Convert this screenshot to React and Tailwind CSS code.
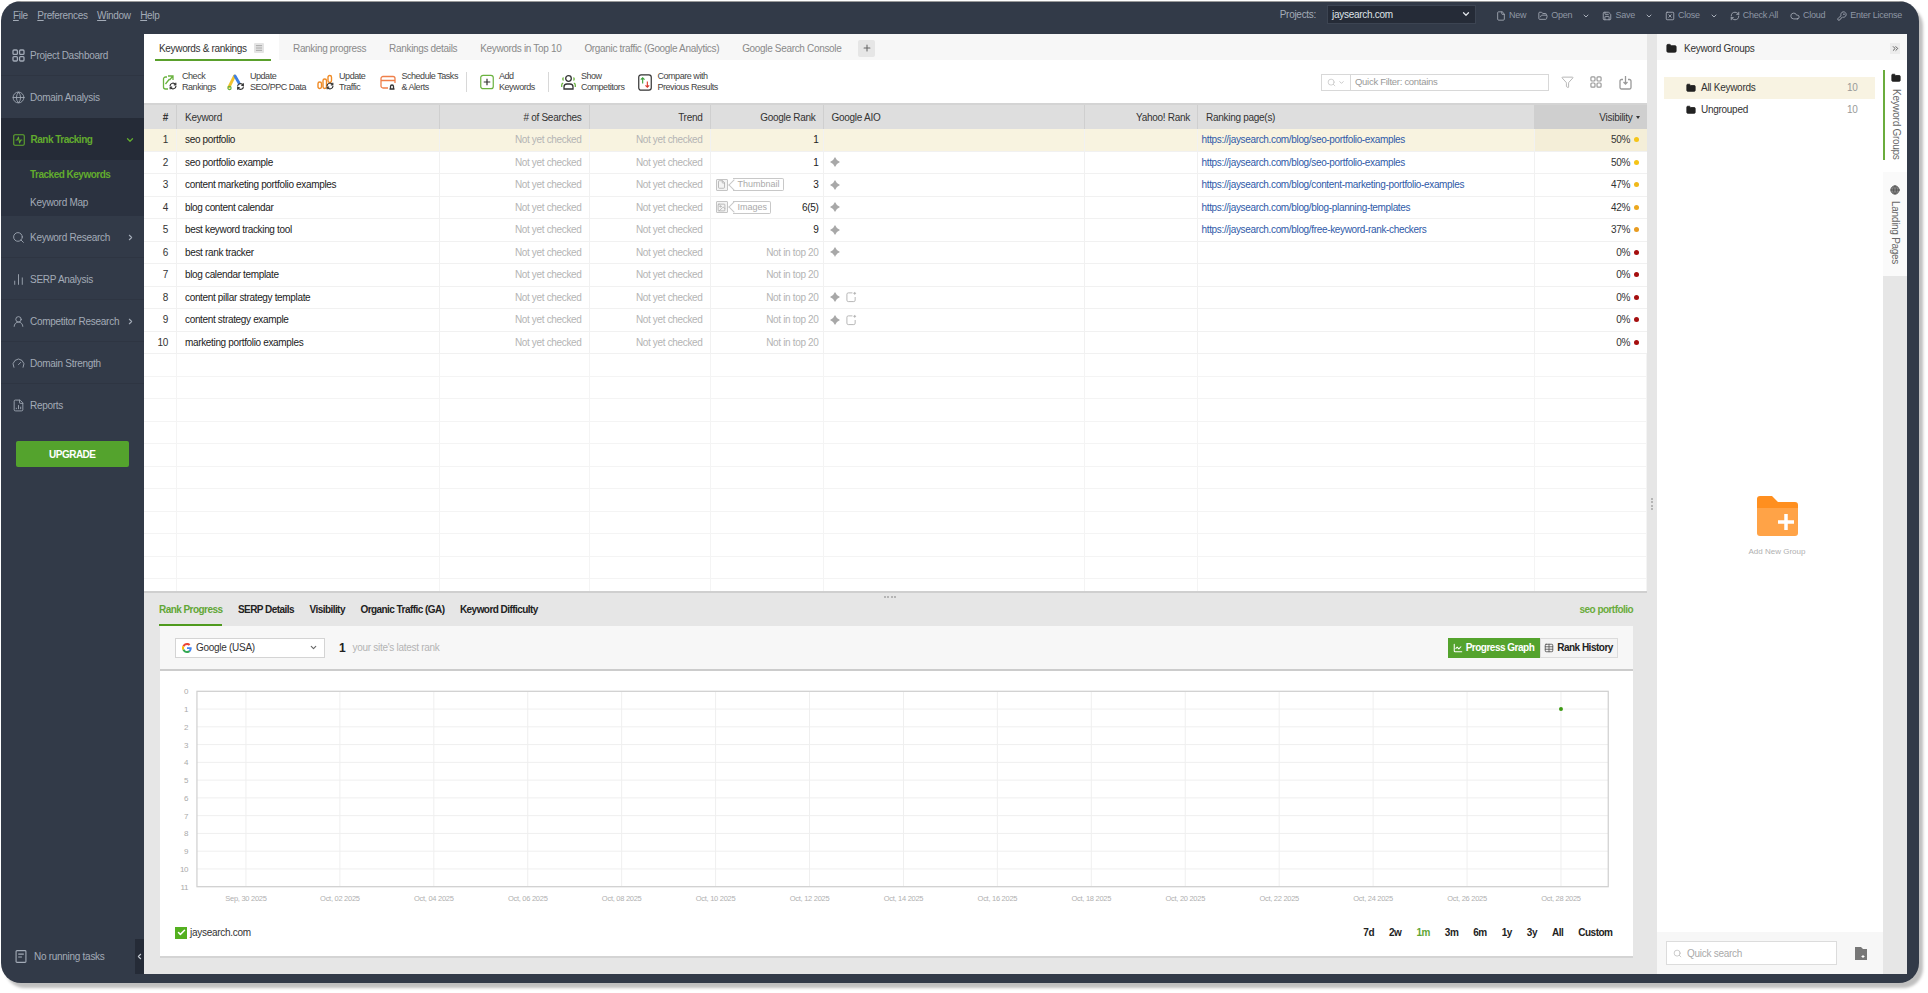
import {
  Globe, Search, ChartNoAxesColumn, UserRound, Gauge, FileChartColumn, ChevronDown, ChevronRight, ChevronLeft,
  Funnel, FolderOpen, Save, SquareX, RefreshCw, Cloud, KeyRound, Menu, Plus, File, Folder, Check, SquareActivity,
  ChevronsRight, Table, ChartLine, Image,
} from "lucide-react";

const COLS = "grid grid-cols-[33px_263px_149.5px_121px_113px_261.5px_113px_336.5px_112px]";

const ROWS = [
  { kw: "seo portfolio", rank: "1", url: "https://jaysearch.com/blog/seo-portfolio-examples", vis: "50%", dot: "bg-[#f5c518]" },
  { kw: "seo portfolio example", rank: "1", aio: 1, url: "https://jaysearch.com/blog/seo-portfolio-examples", vis: "50%", dot: "bg-[#f5c518]" },
  { kw: "content marketing portfolio examples", rank: "3", tag: "Thumbnail", aio: 1, url: "https://jaysearch.com/blog/content-marketing-portfolio-examples", vis: "47%", dot: "bg-[#f0b91a]" },
  { kw: "blog content calendar", rank: "6(5)", tag: "Images", aio: 1, url: "https://jaysearch.com/blog/blog-planning-templates", vis: "42%", dot: "bg-[#eca81f]" },
  { kw: "best keyword tracking tool", rank: "9", aio: 1, url: "https://jaysearch.com/blog/free-keyword-rank-checkers", vis: "37%", dot: "bg-[#e89b20]" },
  { kw: "best rank tracker", aio: 1, vis: "0%", dot: "bg-[#a50f0f]" },
  { kw: "blog calendar template", vis: "0%", dot: "bg-[#a50f0f]" },
  { kw: "content pillar strategy template", aio: 2, vis: "0%", dot: "bg-[#a50f0f]" },
  { kw: "content strategy example", aio: 2, vis: "0%", dot: "bg-[#a50f0f]" },
  { kw: "marketing portfolio examples", vis: "0%", dot: "bg-[#a50f0f]" },
];

const DATES = ["Sep, 30 2025", "Oct, 02 2025", "Oct, 04 2025", "Oct, 06 2025", "Oct, 08 2025", "Oct, 10 2025", "Oct, 12 2025", "Oct, 14 2025", "Oct, 16 2025", "Oct, 18 2025", "Oct, 20 2025", "Oct, 22 2025", "Oct, 24 2025", "Oct, 26 2025", "Oct, 28 2025"];

function DashIcon({ className }) {
  return (
    <svg viewBox="0 0 13 13" className={className} fill="none" stroke="currentColor" strokeWidth="1.3">
      <rect x="1" y="1" width="4.4" height="4.4" rx="1" />
      <rect x="7.6" y="1" width="4.4" height="4.4" rx="1" />
      <rect x="1" y="7.6" width="4.4" height="4.4" rx="1" />
      <rect x="7.6" y="7.6" width="4.4" height="4.4" rx="1" />
    </svg>
  );
}

function NavItem({ icon: Icon, label, arrow, border = true }) {
  return (
    <div className={`h-[42px] flex items-center pt-[1px] pl-[11px] pr-[9px] text-[#a3abb7] ${border ? "border-b border-[#2e3542]" : ""}`}>
      <Icon className="w-[13px] h-[13px] shrink-0" strokeWidth={1.6} />
      <span className="ml-[5px] whitespace-nowrap font-medium">{label}</span>
      {arrow && <ChevronRight className="ml-auto w-[9px] h-[9px]" strokeWidth={3} />}
    </div>
  );
}

function Sidebar() {
  return (
    <div className="w-[143px] shrink-0 flex flex-col text-[10px]">
      <NavItem icon={DashIcon} label="Project Dashboard" />
      <NavItem icon={Globe} label="Domain Analysis" border={false} />
      <div className="h-[42px] bg-[#252b37] flex items-center pt-[1px] pl-[11px] pr-[9px] text-[#62ac2e]">
        <SquareActivity className="w-[14px] h-[14px] -ml-[0.5px]" strokeWidth={1.8} />
        <span className="ml-[5px] font-bold tracking-[-0.5px]">Rank Tracking</span>
        <ChevronDown className="ml-auto w-[10px] h-[10px]" strokeWidth={3} />
      </div>
      <div className="h-[56px] bg-[#2b3240] pl-[29px] flex flex-col font-medium">
        <span className="h-[28px] flex items-center text-[#62ac2e] font-bold tracking-[-0.5px]">Tracked Keywords</span>
        <span className="h-[28px] flex items-center text-[#a3abb7]">Keyword Map</span>
      </div>
      <NavItem icon={Search} label="Keyword Research" arrow />
      <NavItem icon={ChartNoAxesColumn} label="SERP Analysis" />
      <NavItem icon={UserRound} label="Competitor Research" arrow />
      <NavItem icon={Gauge} label="Domain Strength" />
      <NavItem icon={FileChartColumn} label="Reports" border={false} />
      <div className="mt-[15px] ml-[14.5px] w-[113.5px] h-[26px] rounded-[2px] bg-[#54a32d] text-white font-bold tracking-[-0.5px] flex items-center justify-center">
        UPGRADE
      </div>
      <div className="mt-auto h-[35px] flex items-center">
        <svg viewBox="0 0 12 14" className="ml-[14px] w-[12px] h-[13px] text-[#a3abb7]" fill="none" stroke="currentColor" strokeWidth="1.2">
          <rect x="0.7" y="0.7" width="10.6" height="12.6" rx="1" />
          <path d="M3 4.5h6M3 7.5h4" />
        </svg>
        <span className="ml-[7px] text-[#a3abb7] font-medium">No running tasks</span>
        <div className="ml-auto w-[9px] self-stretch bg-[#252b37] flex items-center justify-center text-[#c0c6cf]">
          <ChevronLeft className="w-[9px] h-[9px]" strokeWidth={3} />
        </div>
      </div>
    </div>
  );
}

function TopAction({ icon: Icon, label, chevron }) {
  return (
    <div className="flex items-center text-[#8f97a4] text-[9px] tracking-[-0.25px]">
      <Icon className="w-[10px] h-[10px] text-[#a9b0bb]" strokeWidth={2} />
      <span className="ml-[3px]">{label}</span>
      {chevron && <ChevronDown className="ml-[10px] w-[8px] h-[8px] text-[#a9b0bb]" strokeWidth={3} />}
    </div>
  );
}

function TopBar() {
  return (
    <div className="h-[33px] shrink-0 flex items-center pb-[5px] pl-[12px] pr-[17px] text-[10px] border-t border-[#9a9a9a]">
      <div className="flex gap-[9.500px] text-[#a3abb7] tracking-[-0.33px]">
        <span><u>F</u>ile</span>
        <span><u>P</u>references</span>
        <span><u>W</u>indow</span>
        <span><u>H</u>elp</span>
      </div>
      <div className="ml-auto flex items-center gap-[12px]">
        <div className="flex items-center gap-[11px] mr-[8px] -mt-[3px]">
          <span className="text-[#a3abb7]">Projects:</span>
          <div className="w-[149px] h-[19px] bg-[#252b37] border border-[#3c4452] flex items-center px-[4px] text-[#dfe3e8]">
            jaysearch.com
            <ChevronDown className="ml-auto w-[10px] h-[10px]" strokeWidth={3} />
          </div>
        </div>
        <TopAction icon={File} label="New" />
        <TopAction icon={FolderOpen} label="Open" chevron />
        <TopAction icon={Save} label="Save" chevron />
        <TopAction icon={SquareX} label="Close" chevron />
        <TopAction icon={RefreshCw} label="Check All" />
        <TopAction icon={Cloud} label="Cloud" />
        <TopAction icon={KeyRound} label="Enter License" />
      </div>
    </div>
  );
}

function Tabs() {
  const others = ["Ranking progress", "Rankings details", "Keywords in Top 10", "Organic traffic (Google Analytics)", "Google Search Console"];
  return (
    <div className="h-[26px] shrink-0 bg-[#f7f7f7] flex items-stretch text-[10px] tracking-[-0.33px] text-[#8a8a8a]">
      <div className="w-[135px] bg-white relative flex items-center pt-[2px] pl-[15px] text-[#333]">
        Keywords &amp; rankings
        <span className="ml-[7px] w-[10px] h-[10px] bg-[#e4e4e4] rounded-[1px] flex items-center justify-center">
          <Menu className="w-[8px] h-[8px] text-[#888]" />
        </span>
        <span className="absolute left-[11px] bottom-[-1px] w-[116px] h-[2px] bg-[#5aa02c]" />
      </div>
      <div className="flex items-center gap-[23px] ml-[14px] pt-[2px]">
        {others.map((t) => <span key={t}>{t}</span>)}
        <span className="-ml-[6px] w-[17px] h-[17px] bg-[#e6e6e6] rounded-[2px] flex items-center justify-center">
          <Plus className="w-[10px] h-[10px] text-[#666]" strokeWidth={2.5} />
        </span>
      </div>
    </div>
  );
}

function MiniSync({ x, y }) {
  return (
    <g transform={`translate(${x} ${y})`} fill="none" stroke="#333" strokeWidth="1.2">
      <path d="M0.5 3.5A3 3 0 0 1 6 2M6.5 3.5A3 3 0 0 1 1 5" />
      <path d="M6.3 0.3V2.3H4.3M0.7 6.7V4.7H2.7" />
    </g>
  );
}

const TOOL_ICONS = {
  check: (
    <svg viewBox="0 0 15 17" className="w-[15px] h-[17px]" fill="none" stroke="#6ab23f" strokeWidth="1.3">
      <path d="M5 3H3.5A2 2 0 0 0 1.5 5v8a2 2 0 0 0 2 2H6" />
      <path d="M3.5 10l4-5M6 2h5v4M11 2 7.5 6" />
      <MiniSync x="7.5" y="8.5" />
    </svg>
  ),
  ppc: (
    <svg viewBox="0 0 18 18" className="w-[18px] h-[18px]" fill="none">
      <path d="M2 14 7.5 3" stroke="#f2c230" strokeWidth="2.8" strokeLinecap="round" />
      <path d="M8 3l4 7" stroke="#3f7fe0" strokeWidth="2.8" strokeLinecap="round" />
      <circle cx="2.5" cy="15" r="1.6" stroke="#6ab23f" strokeWidth="1.2" />
      <MiniSync x="10" y="10" />
    </svg>
  ),
  traffic: (
    <svg viewBox="0 0 17 16" className="w-[17px] h-[16px]" fill="none" stroke="#f08a24" strokeWidth="1.4">
      <rect x="1" y="8" width="3.5" height="6.5" rx="1.7" />
      <rect x="6" y="5" width="3.5" height="9.5" rx="1.7" />
      <rect x="11" y="1.5" width="3.5" height="7" rx="1.7" />
      <MiniSync x="9.5" y="8.5" />
    </svg>
  ),
  schedule: (
    <svg viewBox="0 0 16 17" className="w-[16px] h-[17px]" fill="none" stroke="#ef7f4a" strokeWidth="1.3">
      <path d="M8 14H3a2 2 0 0 1-2-2V4.500a2 2 0 0 1 2-2h10a2 2 0 0 1 2 2V9" />
      <path d="M1 6.500h14" />
      <path d="M9.500 15h5M10.500 14.500v-2a1.500 1.500 0 0 1 3 0v2" stroke="#333" />
    </svg>
  ),
  add: (
    <svg viewBox="0 0 15 16" className="w-[14px] h-[16px]" fill="none">
      <rect x="0.8" y="0.8" width="13.400" height="14.400" rx="2.500" stroke="#6ab23f" strokeWidth="1.300" />
      <path d="M7.500 4.500v7M4 8h7" stroke="#333" strokeWidth="1.300" />
    </svg>
  ),
  show: (
    <svg viewBox="0 0 15 16" className="w-[15px] h-[16px]" fill="none" strokeWidth="1.300">
      <circle cx="7.500" cy="4.500" r="2.800" stroke="#333" />
      <path d="M3 15v-2a3 3 0 0 1 3-3h3a3 3 0 0 1 3 3v2z" stroke="#333" />
      <path d="M2.500 3.500a2 2 0 0 0 0 3M12.500 3.500a2 2 0 0 1 0 3M0.700 13v-2a2 2 0 0 1 1.500-1.800M14.300 13v-2a2 2 0 0 0-1.500-1.800" stroke="#6ab23f" />
    </svg>
  ),
  compare: (
    <svg viewBox="0 0 15 18" className="w-[14px] h-[17px]" fill="none">
      <rect x="0.800" y="0.800" width="13.400" height="16.400" rx="2.500" stroke="#333" strokeWidth="1.300" />
      <path d="M5 10V4M3 6l2-2 2 2" stroke="#3ca03c" strokeWidth="1.200" />
      <path d="M10 8v6M8 12l2 2 2-2" stroke="#d93a2b" strokeWidth="1.200" />
    </svg>
  ),
};

function ToolButton({ icon, lines, className = "" }) {
  return (
    <div className={`flex items-center gap-[5px] text-[9px] leading-[11px] tracking-[-0.45px] text-[#444] ${className}`}>
      {TOOL_ICONS[icon]}
      <div className="whitespace-nowrap">
        <div>{lines[0]}</div>
        <div>{lines[1]}</div>
      </div>
    </div>
  );
}

function Toolbar() {
  return (
    <div className="h-[45px] shrink-0 bg-white flex items-center pt-[1px] pl-[18px] pr-[15px] border-b-2 border-[#d4d4d4]">
      <ToolButton icon="check" lines={["Check", "Rankings"]} />
      <ToolButton icon="ppc" lines={["Update", "SEO/PPC Data"]} className="ml-[11px]" />
      <ToolButton icon="traffic" lines={["Update", "Traffic"]} className="ml-[11px]" />
      <ToolButton icon="schedule" lines={["Schedule Tasks", "& Alerts"]} className="ml-[15px]" />
      <span className="ml-[8px] w-[1px] h-[20px] bg-[#d8d8d8]" />
      <ToolButton icon="add" lines={["Add", "Keywords"]} className="ml-[13px]" />
      <span className="ml-[13px] w-[1px] h-[20px] bg-[#d8d8d8]" />
      <ToolButton icon="show" lines={["Show", "Competitors"]} className="ml-[12px]" />
      <ToolButton icon="compare" lines={["Compare with", "Previous Results"]} className="ml-[14px]" />
      <div className="ml-auto flex items-center">
        <div className="w-[228px] h-[17px] border border-[#d8d8d8] flex items-center text-[9.5px] text-[#999]">
          <span className="w-[29px] h-full border-r border-[#d8d8d8] flex items-center justify-center gap-[2px] text-[#c4c4c4]">
            <Search className="w-[9px] h-[9px]" />
            <ChevronDown className="w-[7px] h-[7px]" strokeWidth={3} />
          </span>
          <span className="ml-[4px]">Quick Filter: contains</span>
        </div>
        <Funnel className="ml-[12px] w-[13px] h-[14px] text-[#9a9a9a]" strokeWidth={1.3} />
        <DashIcon className="ml-[16px] w-[12px] h-[14px] text-[#9a9a9a]" />
        <svg viewBox="0 0 13 15" className="ml-[17px] w-[13px] h-[15px] text-[#9a9a9a]" fill="none" stroke="currentColor" strokeWidth="1.300">
          <path d="M4 4.500H2.500a1.500 1.500 0 0 0-1.500 1.500v6.500A1.500 1.500 0 0 0 2.500 14h8a1.500 1.500 0 0 0 1.500-1.500V6a1.500 1.500 0 0 0-1.500-1.500H9" />
          <path d="M6.500 1v8M4.500 7l2 2 2-2" />
        </svg>
      </div>
    </div>
  );
}

function Sparkle() {
  return (
    <svg viewBox="0 0 10 10" className="w-[10px] h-[10px] shrink-0 text-[#a8a8a8]" fill="currentColor">
      <path d="M5 0Q6.400 3.600 10 5Q6.400 6.400 5 10Q3.600 6.400 0 5Q3.600 3.600 5 0Z" />
    </svg>
  );
}

function NewCorner() {
  return (
    <svg viewBox="0 0 12 12" className="w-[11px] h-[12px] text-[#b0b0b0]" fill="none" stroke="currentColor" strokeWidth="1">
      <path d="M7 1.500H2.500a1.500 1.500 0 0 0-1.500 1.500v6.500A1.500 1.500 0 0 0 2.500 11h6A1.500 1.500 0 0 0 10 9.500V6" />
      <path d="M9.500 0.500v3M8 2h3" />
    </svg>
  );
}

function RankTag({ label }) {
  const Icon = label === "Images" ? Image : File;
  return (
    <div className="flex items-center gap-[5px]">
      <span className="w-[12px] h-[12px] border border-[#c4c4c4] rounded-[1px] flex items-center justify-center bg-[#f4f4f4]">
        <Icon className="w-[9px] h-[9px] text-[#aaa]" />
      </span>
      <span className="relative h-[13px] pl-[5px] pr-[3px] border border-[#c8c8c8] border-l-0 rounded-r-[2px] text-[9px] leading-[11px] tracking-normal text-[#aaa]">
        <span className="absolute left-[-3px] top-[1.500px] w-[8px] h-[8px] rotate-45 border-l border-b border-[#c8c8c8]" />
        {label}
      </span>
    </div>
  );
}

function KeywordRow({ row, index }) {
  const selected = index === 0;
  const cell = "border-r border-[#f1f1f1] h-full flex items-center";
  return (
    <div className={`${COLS} h-[22.5px] border-b border-[#f1f1f1] text-[10px] tracking-[-0.34px] ${selected ? "bg-[#f8f3e0]" : "bg-white"}`}>
      <div className={`${cell} justify-end pr-[8px] text-[#333]`}>{index + 1}</div>
      <div className={`${cell} pl-[8px] text-[#222]`}>{row.kw}</div>
      <div className={`${cell} justify-end pr-[7px] text-[#b4b4b4]`}>Not yet checked</div>
      <div className={`${cell} justify-end pr-[7px] text-[#b4b4b4]`}>Not yet checked</div>
      <div className={`${cell} pl-[5px] pr-[4px]`}>
        {row.tag && <RankTag label={row.tag} />}
        <span className={`ml-auto ${row.rank ? "text-[#222]" : "text-[#b4b4b4]"}`}>{row.rank || "Not in top 20"}</span>
      </div>
      <div className={`${cell} pl-[6px] gap-[6px]`}>
        {row.aio >= 1 && <Sparkle />}
        {row.aio === 2 && <NewCorner />}
      </div>
      <div className={cell} />
      <div className={`${cell} pl-[3.5px] text-[#2f5aa8] whitespace-nowrap`}>{row.url}</div>
      <div className={`h-full flex items-center justify-end pr-[7.5px] text-[#333] ${selected ? "bg-[#f4eed8]" : ""}`}>
        {row.vis}
        <span className={`ml-[4px] w-[5px] h-[5px] rounded-full ${row.dot}`} />
      </div>
    </div>
  );
}

function KeywordTable() {
  const head = "h-full flex items-center pt-[1px] border-r border-[#cfcfcf]";
  return (
    <div className="h-[486px] shrink-0 overflow-hidden bg-white">
      <div className={`${COLS} h-[24px] bg-[#dedede] text-[10px] text-[#333]`}>
        <div className={`${head} justify-end pr-[8px] font-bold`}>#</div>
        <div className={`${head} pl-[8px]`}>Keyword</div>
        <div className={`${head} justify-end pr-[7px]`}># of Searches</div>
        <div className={`${head} justify-end pr-[7px]`}>Trend</div>
        <div className={`${head} justify-end pr-[7px]`}>Google Rank</div>
        <div className={`${head} pl-[8px]`}>Google AIO</div>
        <div className={`${head} justify-end pr-[7px]`}>Yahoo! Rank</div>
        <div className={`${head} pl-[8px]`}>Ranking page(s)</div>
        <div className="h-full flex items-center justify-end pt-[1px] pr-[7px] bg-[#cfcfcf]">
          Visibility <span className="ml-[3px] border-x-[2.500px] border-t-[3px] border-x-transparent border-t-[#333]" />
        </div>
      </div>
      {ROWS.map((row, i) => <KeywordRow key={row.kw} row={row} index={i} />)}
      {Array.from({ length: 11 }, (_, i) => (
        <div key={i} className={`${COLS} h-[22.5px] border-b border-[#f4f4f4]`}>
          {Array.from({ length: 9 }, (_, j) => <div key={j} className="border-r border-[#f4f4f4]" />)}
        </div>
      ))}
    </div>
  );
}

function GoogleG() {
  return (
    <svg viewBox="0 0 48 48" className="w-[10px] h-[10px]">
      <path fill="#EA4335" d="M24 9.500c3.500 0 6.700 1.200 9.200 3.600l6.900-6.900C35.900 2.400 30.500 0 24 0 14.600 0 6.500 5.400 2.600 13.200l8 6.200C12.500 13.700 17.800 9.500 24 9.500z" />
      <path fill="#4285F4" d="M46.500 24.500c0-1.600-.1-3.100-.4-4.500H24v9h12.700c-.5 2.900-2.200 5.400-4.700 7l7.700 6c4.500-4.200 6.800-10.300 6.800-17.500z" />
      <path fill="#FBBC05" d="M10.500 28.600c-.5-1.400-.8-3-.8-4.600s.3-3.200.8-4.600l-8-6.200C.9 16.500 0 20.100 0 24s.9 7.500 2.600 10.800l7.900-6.200z" />
      <path fill="#34A853" d="M24 48c6.500 0 11.900-2.100 15.900-5.800l-7.700-6c-2.200 1.400-4.900 2.300-8.100 2.300-6.200 0-11.500-4.200-13.400-9.900l-8 6.200C6.500 42.600 14.600 48 24 48z" />
    </svg>
  );
}

function Chart() {
  const left = 36.7, right = 1448, top = 20.3, bottom = 215.7;
  const ys = Array.from({ length: 12 }, (_, i) => top + ((bottom - top) / 11) * i);
  const xs = DATES.map((_, i) => 85.7 + i * 93.93);
  return (
    <svg className="w-full h-[240px] shrink-0" viewBox="0 0 1472 240">
      {ys.map((y, i) => (
        <g key={i}>
          <line x1={left} x2={right} y1={y} y2={y} stroke="#efefef" />
          <text x="28" y={y + 3} textAnchor="end" fontSize="8" fill="#aaa">{i}</text>
        </g>
      ))}
      {xs.map((x, i) => (
        <g key={i}>
          <line x1={x} x2={x} y1={top} y2={bottom} stroke="#efefef" />
          <text x={x} y="229.500" textAnchor="middle" fontSize="7.500" fill="#b0b0b0">{DATES[i]}</text>
        </g>
      ))}
      <rect x={left} y={top} width={right - left} height={bottom - top} fill="none" stroke="#cfcfcf" strokeWidth="1.200" />
      <circle cx={xs[14]} cy={ys[1]} r="2" fill="#3c9a12" />
    </svg>
  );
}

function BottomPanel() {
  const tabs = ["SERP Details", "Visibility", "Organic Traffic (GA)", "Keyword Difficulty"];
  const ranges = ["7d", "2w", "1m", "3m", "6m", "1y", "3y", "All", "Custom"];
  return (
    <div className="flex-1 min-h-0 bg-[#e6e6e6] border-t-2 border-[#cfcfcf] flex flex-col text-[10px] relative">
      <span className="absolute left-[740px] top-[3px] w-[12px] border-t-2 border-dotted border-[#b5b5b5]" />
      <div className="h-[33px] shrink-0 flex items-stretch pl-[15px] pr-[14px] font-bold tracking-[-0.55px] text-[#222]">
        <div className="flex items-center gap-[15.500px]">
          <span className="h-full flex items-center border-b-2 border-[#4f9a1e] text-[#62a636] pt-[2px]">Rank Progress</span>
          {tabs.map((t) => <span key={t}>{t}</span>)}
        </div>
        <span className="ml-auto flex items-center text-[#6aac3c]">seo portfolio</span>
      </div>
      <div className="flex-1 min-h-0 ml-[16px] mr-[14.500px] mb-[16px] flex flex-col bg-white border-b-2 border-[#d4d4d4]">
        <div className="h-[45px] shrink-0 bg-[#f7f7f7] border-b-2 border-[#cccccc] flex items-center pl-[15px] pr-[15px]">
          <div className="w-[150px] h-[20px] bg-white border border-[#d4d4d4] flex items-center px-[6px] text-[#333]">
            <GoogleG />
            <span className="ml-[4px]">Google (USA)</span>
            <ChevronDown className="ml-auto w-[9px] h-[9px] text-[#666]" strokeWidth={3} />
          </div>
          <span className="ml-[14px] text-[12px] font-bold text-[#222]">1</span>
          <span className="ml-[7px] text-[#b4b4b4]">your site's latest rank</span>
          <div className="ml-auto flex h-[20px] font-bold tracking-[-0.5px]">
            <div className="w-[92px] bg-[#54a32d] text-white flex items-center justify-center gap-[3px]">
              <ChartLine className="w-[10px] h-[10px]" strokeWidth={2.500} />
              Progress Graph
            </div>
            <div className="w-[78px] bg-[#f4f4f4] border border-[#dcdcdc] text-[#222] flex items-center justify-center gap-[3px]">
              <Table className="w-[10px] h-[10px] text-[#555]" strokeWidth={2} />
              Rank History
            </div>
          </div>
        </div>
        <Chart />
        <div className="flex-1 flex items-center pl-[15px] pr-[20px] pb-[2px]">
          <span className="w-[12px] h-[12px] bg-[#54b020] flex items-center justify-center">
            <Check className="w-[9px] h-[9px] text-white" strokeWidth={4} />
          </span>
          <span className="ml-[3px] text-[#333]">jaysearch.com</span>
          <div className="ml-auto flex gap-[15px] font-bold tracking-[-0.5px] text-[#222]">
            {ranges.map((r) => <span key={r} className={r === "1m" ? "text-[#62a636]" : ""}>{r}</span>)}
          </div>
        </div>
      </div>
    </div>
  );
}

function GroupRow({ label, active }) {
  return (
    <div className={`h-[21.700px] flex items-center pl-[22px] pr-[17px] text-[10px] text-[#333] ${active ? "bg-[#f8f3e2]" : ""}`}>
      <Folder className="w-[10px] h-[10px] text-[#222]" fill="currentColor" />
      <span className="ml-[5px]">{label}</span>
      <span className="ml-auto text-[#999]">10</span>
    </div>
  );
}

function RightPanel() {
  return (
    <div className="w-[250px] shrink-0 flex flex-col bg-white">
      <div className="h-[26px] shrink-0 bg-[#f7f7f7] flex items-center pt-[2px] pl-[9px] pr-[7px] text-[10px] text-[#333]">
        <Folder className="w-[11px] h-[11px] text-[#222]" fill="currentColor" />
        <span className="ml-[7px]">Keyword Groups</span>
        <span className="ml-auto w-[10px] h-[11px] bg-[#ececec] flex items-center justify-center">
          <ChevronsRight className="w-[9px] h-[9px] text-[#555]" strokeWidth={2.500} />
        </span>
      </div>
      <div className="flex-1 min-h-0 flex">
        <div className="w-[226px] flex flex-col">
          <div className="pt-[17px] px-[7px] pr-[8.500px]">
            <GroupRow label="All Keywords" active />
            <GroupRow label="Ungrouped" />
          </div>
          <div className="flex-1 flex flex-col items-center justify-center pl-[14px]">
            <svg viewBox="0 0 42 42" className="w-[42px] h-[42px]">
              <path d="M1 5a3 3 0 0 1 3-3h12l6 6h17a3 3 0 0 1 3 3v4H1z" fill="#ff8f1f" />
              <path d="M1 14h41v25a3 3 0 0 1-3 3H4a3 3 0 0 1-3-3z" fill="#ffa347" />
              <path d="M30 20v16M22 28h16" stroke="#fff" strokeWidth="3.500" />
            </svg>
            <span className="mt-[10px] text-[8px] tracking-normal text-[#b0b0b0]">Add New Group</span>
          </div>
          <div className="h-[42px] shrink-0 bg-[#f7f7f7] flex items-center pl-[9px] text-[10px] text-[#aaa]">
            <div className="w-[171px] h-[24px] bg-white border border-[#dcdcdc] flex items-center pl-[6px]">
              <Search className="w-[9px] h-[9px] text-[#bbb]" />
              <span className="ml-[5px]">Quick search</span>
            </div>
            <svg viewBox="0 0 12 14" className="ml-[18px] w-[12px] h-[14px]">
              <path d="M0 1h6l2 2h4v11H0z" fill="#777" />
              <path d="M8 9v3M6.500 10.500h3" stroke="#fff" />
            </svg>
          </div>
        </div>
        <div className="w-[24px] flex flex-col text-[10px] text-[#666] pt-[10px]">
          <div className="h-[90px] border-l-2 border-[#6aac3c] flex flex-col items-center pt-[3px]">
            <Folder className="w-[10px] h-[10px] text-[#222] shrink-0" fill="currentColor" />
            <span className="mt-[6px] whitespace-nowrap [writing-mode:vertical-rl]">Keyword Groups</span>
          </div>
          <div className="mt-[12px] h-[104px] bg-[#fafafa] flex flex-col items-center pt-[13px]">
            <Globe className="w-[10px] h-[10px] text-[#555] shrink-0" fill="#888" />
            <span className="mt-[6px] whitespace-nowrap [writing-mode:vertical-rl]">Landing Pages</span>
          </div>
          <div className="flex-1 bg-[#e6e6e6]" />
        </div>
      </div>
    </div>
  );
}

export default function App() {
  return (
    <div className="w-full h-[993px] bg-white pl-[1px] pt-[1px] pr-[9px] pb-[10px] font-['Liberation_Sans',sans-serif] tracking-[-0.28px] overflow-hidden">
      <div className="h-full rounded-[20px] bg-[#323a48] shadow-[4px_5px_3px_rgba(0,0,0,0.25)] flex flex-col overflow-hidden">
        <TopBar />
        <div className="flex-1 min-h-0 flex pb-[9px] pr-[12px]">
          <Sidebar />
          <div className="flex-1 min-w-0 flex bg-[#e6e6e6]">
            <div className="w-[1503px] shrink-0 flex flex-col">
              <Tabs />
              <Toolbar />
              <KeywordTable />
              <BottomPanel />
            </div>
            <div className="w-[10px] shrink-0 flex items-center justify-center">
              <span className="h-[12px] border-l-2 border-dotted border-[#b5b5b5]" />
            </div>
            <RightPanel />
          </div>
        </div>
      </div>
    </div>
  );
}
